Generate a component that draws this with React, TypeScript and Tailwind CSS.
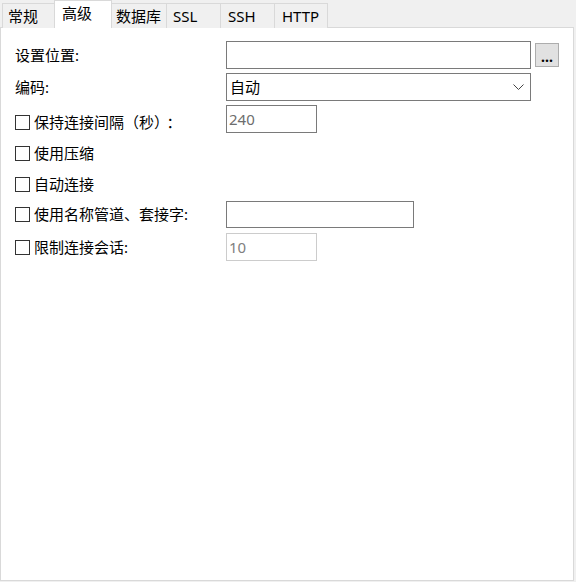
import React from 'react';

const font = { fontFamily: '"Noto Sans", "Noto Sans CJK SC", sans-serif' };

const tabs = [
  { label: '常规', w: 'w-[53px]', pl: 'pl-[5px]' },
  { label: '高级', w: 'w-[58px]', pl: 'pl-[7px]', active: true },
  { label: '数据库', w: 'w-[56px]', pl: 'pl-[4px]' },
  { label: 'SSL', w: 'w-[55px]', pl: 'pl-[6px]' },
  { label: 'SSH', w: 'w-[55px]', pl: 'pl-[7px]' },
  { label: 'HTTP', w: 'w-[54px]', pl: 'pl-[7px]' },
];

const Checkbox = () => (
  <span className="inline-block w-[15px] h-[15px] border border-[#333333] bg-white shrink-0" />
);

const CheckLabel: React.FC<{ text: React.ReactNode }> = ({ text }) => (
  <div className="flex items-center gap-[4px]">
    <Checkbox />
    <span className="leading-none">{text}</span>
  </div>
);

export default function App() {
  return (
    <div className="w-[576px] h-[582px] bg-[#f0f0f0] text-[15px] text-black overflow-hidden" style={font}>
      {/* tab strip */}
      <div className="flex items-end h-[28px] pl-[2px]">
        {tabs.map((t, i) => (
          <div
            key={t.label}
            className={
              t.active
                ? `relative z-10 ${t.w} ${t.pl} h-[28px] -ml-px bg-white border-l border-t border-r border-[#d9d9d9] flex items-center pb-[2px]`
                : `${t.w} ${t.pl} h-[25px] ${i > 0 ? '-ml-px' : ''} bg-[#f0f0f0] border-l border-t border-r border-[#d9d9d9] flex items-center`
            }
          >
            <span className="leading-none">{t.label}</span>
          </div>
        ))}
      </div>

      {/* panel */}
      <div className="-mt-px w-[574px] h-[554px] bg-white border border-[#d9d9d9] pt-[13px] pl-[14px]">
        {/* 设置位置 */}
        <div className="flex items-center h-[28px]">
          <div className="w-[211px] leading-none">设置位置:</div>
          <div className="w-[305px] h-[28px] border border-[#7a7a7a] bg-white" />
          <button className="ml-[4px] w-[24px] h-[24px] bg-[#e1e1e1] border border-[#adadad] flex items-center justify-center text-[14px] font-bold leading-none pt-[3px]">
            ...
          </button>
        </div>

        {/* 编码 */}
        <div className="flex items-center h-[28px] mt-[4px]">
          <div className="w-[211px] leading-none">编码:</div>
          <div className="w-[305px] h-[28px] border border-[#7a7a7a] bg-white flex items-center justify-between pl-[3px] pr-[6px]">
            <span className="leading-none">自动</span>
            <svg width="11" height="7" viewBox="0 0 11 7" fill="none" stroke="#444" strokeWidth="1">
              <path d="M0.5 0.5 L5.5 5.5 L10.5 0.5" />
            </svg>
          </div>
        </div>

        {/* 保持连接间隔 */}
        <div className="flex items-center h-[28px] mt-[4px]">
          <div className="w-[211px] translate-y-[3px]">
            <CheckLabel
              text={
                <>
                  保持连接间隔（秒）<span className="pl-[5px]">：</span>
                </>
              }
            />
          </div>
          <div className="w-[91px] h-[28px] border border-[#7a7a7a] bg-white flex items-center pl-[2px] text-[#6d6d6d]">
            <span className="leading-none">240</span>
          </div>
        </div>

        {/* 使用压缩 */}
        <div className="flex items-center h-[20px] mt-[10px]">
          <CheckLabel text="使用压缩" />
        </div>

        {/* 自动连接 */}
        <div className="flex items-center h-[20px] mt-[11px]">
          <CheckLabel text="自动连接" />
        </div>

        {/* 使用名称管道 */}
        <div className="flex items-center h-[27px] mt-[7px]">
          <div className="w-[211px]">
            <CheckLabel text="使用名称管道、套接字:" />
          </div>
          <div className="w-[188px] h-[27px] border border-[#7a7a7a] bg-white" />
        </div>

        {/* 限制连接会话 */}
        <div className="flex items-center h-[28px] mt-[5px]">
          <div className="w-[211px]">
            <CheckLabel text="限制连接会话:" />
          </div>
          <div className="w-[91px] h-[28px] border border-[#cccccc] bg-white flex items-center pl-[2px] text-[#808080]">
            <span className="leading-none">10</span>
          </div>
        </div>
      </div>
    </div>
  );
}
